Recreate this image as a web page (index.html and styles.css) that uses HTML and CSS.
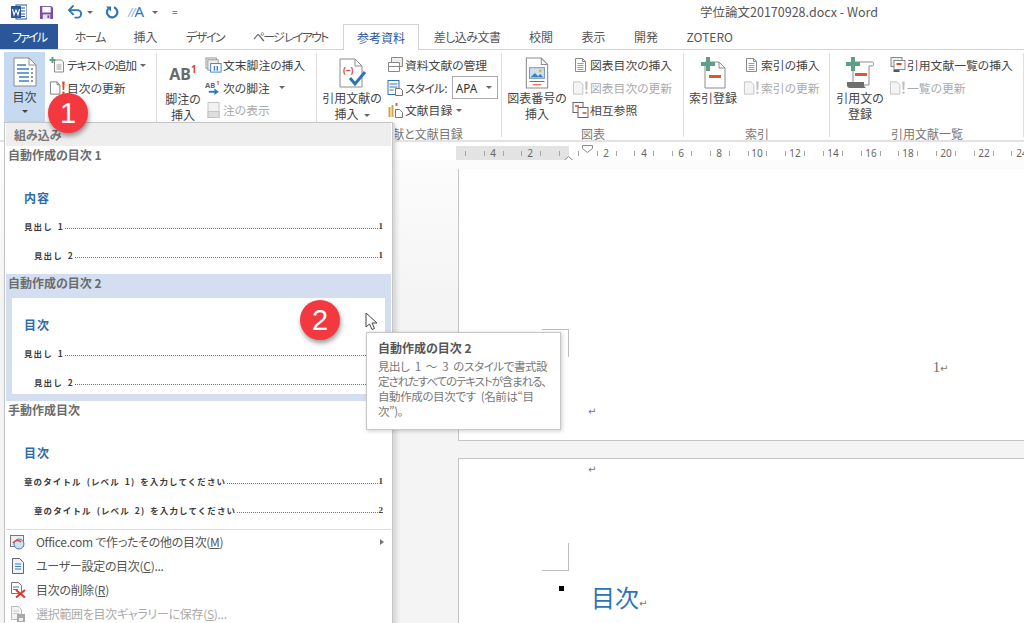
FILE: index.html
```html
<!DOCTYPE html>
<html lang="ja">
<head>
<meta charset="utf-8">
<title>学位論文20170928.docx - Word</title>
<link rel="stylesheet" href="styles.css">
</head>
<body>
<svg class="defs" aria-hidden="true">
  <symbol id="page" viewBox="0 0 16 16"><path d="M3 1.500h7l3 3v10H3z" fill="#fff" stroke="#8a8a8a"/><path d="M10 1.500v3h3" fill="none" stroke="#8a8a8a"/><path d="M5 6.500h6M5 8.500h6M5 10.500h6M5 12.500h6" stroke="#9a9a9a"/></symbol>
  <symbol id="update" viewBox="0 0 18 16"><path d="M1.500 1.500h7l3 3v10h-10z" fill="#fff" stroke="#7c7c7c"/><path d="M8.500 1.500v3h3" fill="none" stroke="#7c7c7c"/><path d="M14 1h2.600l-.5 9H14.500z" fill="#d9472b"/><rect x="14.200" y="11.800" width="2.200" height="2.400" fill="#d9472b"/></symbol>
  <symbol id="update-off" viewBox="0 0 18 16"><path d="M1.500 1.500h7l3 3v10h-10z" fill="#f4f4f4" stroke="#c4c4c4"/><path d="M14 1h2.600l-.5 9H14.500z" fill="#bdbdbd"/><rect x="14.200" y="11.800" width="2.200" height="2.400" fill="#bdbdbd"/></symbol>
  <symbol id="addpage" viewBox="0 0 28 32"><path d="M6 5h14l6 6v20H6z" fill="#fff" stroke="#8c8c8c"/><path d="M20 5v6h6" fill="none" stroke="#8c8c8c"/><path d="M7 0h4v5h5v4h-5v5H7V9H2V5h5z" fill="#5f9e86"/><rect x="10" y="18" width="12" height="3" fill="#d9583a"/></symbol>
</svg>

<header class="titlebar">
  <svg class="qat qat-word" viewBox="0 0 16 16"><rect x="5" y="1" width="11" height="14" fill="#fff" stroke="#2b579a"/><path d="M10 4h4M10 7h4M10 10h4M10 12.500h4" stroke="#2b579a"/><rect y="2" width="10" height="12" fill="#2b579a"/><path d="M1.500 5l1.500 6 2-5 2 5 1.500-6" fill="none" stroke="#fff" stroke-width="1.100"/></svg>
  <svg class="qat qat-save" viewBox="0 0 16 16"><path d="M1 1h12l2 2v12H1z" fill="#7a4f9f"/><rect x="3.500" y="2" width="9" height="6" fill="#fff"/><rect x="4" y="10" width="8" height="5" fill="#e9e2f0"/><rect x="9" y="11" width="2" height="3" fill="#7a4f9f"/></svg>
  <svg class="qat qat-undo" viewBox="0 0 16 14"><path d="M2 5h8a4 4 0 0 1 0 8H7" fill="none" stroke="#2e75b6" stroke-width="2"/><path d="M6 0L1 5l5 5" fill="none" stroke="#2e75b6" stroke-width="2"/></svg>
  <span class="caret qat-c1"></span>
  <svg class="qat qat-redo" viewBox="0 0 14 14"><path d="M9 2.300a5.200 5.200 0 1 1-5.800 1.500" fill="none" stroke="#2e75b6" stroke-width="2.200"/><path d="M1 1.500h5v5z" fill="#2e75b6"/></svg>
  <span class="qat-font"><i>//</i>A</span>
  <span class="caret"></span>
  <span class="qat-more">=</span>
  <span class="doc-title">学位論文20170928.docx - Word</span>
</header>

<nav class="tabs">
  <span class="tab tab-file"><span class="k-file">ファイル</span></span>
  <span class="tab tab-first k">ホーム</span>
  <span class="tab">挿入</span>
  <span class="tab k">デザイン</span>
  <span class="tab k-layout">ページ レイアウト</span>
  <span class="tab tab-active">参考資料</span>
  <span class="tab k-merge">差し込み文書</span>
  <span class="tab">校閲</span>
  <span class="tab">表示</span>
  <span class="tab">開発</span>
  <span class="tab">ZOTERO</span>
</nav>

<section class="ribbon">
  <div class="group g1">
    <div class="group-body">
      <div class="big big-toc">
        <svg class="big-icon" viewBox="0 0 24 30"><path d="M1 1h15l7 7v21H1z" fill="#fff" stroke="#8c8c8c"/><path d="M16 1v7h7" fill="none" stroke="#8c8c8c"/><path d="M4 8h9M4 12h12M4 16h12M6 20h10M6 24h10" stroke="#3f7fc4" stroke-width="1.500"/><path d="M18 12h2M18 16h2M18 20h2M18 24h2" stroke="#777" stroke-width="1.500"/></svg>
        <span class="big-label">目次</span>
        <span class="caret caret-big"></span>
      </div>
      <div class="rows">
        <div class="row"><svg class="ico" viewBox="0 0 16 16"><path d="M5 3h7l2 2v10H5z" fill="#fff" stroke="#8a8a8a"/><path d="M7 8h5M7 10h5M7 12h5" stroke="#9a9a9a"/><path d="M2 0h2v2h2v2H4v2H2V4H0V2h2z" fill="#5f9e86"/></svg><span class="k-row">テキストの追加</span><span class="caret"></span></div>
        <div class="row"><svg class="ico" viewBox="0 0 18 16"><use href="#update"/></svg>目次の更新</div>
      </div>
    </div>
    <div class="group-label">目次</div>
  </div>

  <div class="group g2">
    <div class="group-body">
      <div class="big big-note">
        <span class="ab">AB<sup>1</sup></span>
        <span class="big-label">脚注の<br>挿入</span>
      </div>
      <div class="rows">
        <div class="row"><svg class="ico" viewBox="0 0 18 16"><rect x="1" y="0.500" width="11" height="11" fill="#eee" stroke="#999"/><rect x="3" y="2.500" width="11" height="11" fill="#eee" stroke="#999"/><rect x="6" y="6.500" width="11" height="9" fill="#fff" stroke="#3f7fc4"/><path d="M10 9v5M13 9v5" stroke="#3f7fc4" stroke-width="1.500"/></svg>文末脚注の挿入</div>
        <div class="row"><svg class="ico" viewBox="0 0 18 16"><text x="0" y="8" class="ab-mini">AB</text><text x="12" y="5" class="ab-mini-sup">1</text><path d="M4 12h8" stroke="#2e75b6" stroke-width="2"/><path d="M10 8.500l4.500 3.500-4.500 3.500z" fill="#2e75b6"/></svg>次の脚注<span class="caret caret-wide"></span></div>
        <div class="row row-off"><svg class="ico" viewBox="0 0 16 16"><rect x="2.500" y="0.500" width="11" height="15" fill="#f2f2f2" stroke="#c4c4c4"/><rect x="2.500" y="9.500" width="11" height="6" fill="#ddd" stroke="#c4c4c4"/></svg>注の表示</div>
      </div>
    </div>
    <div class="group-label">脚注</div>
  </div>

  <div class="group g3">
    <div class="group-body">
      <div class="big big-cite">
        <svg class="big-icon" viewBox="0 0 30 30"><path d="M3 1h15l7 7v21H3z" fill="#fff" stroke="#8c8c8c"/><path d="M18 1v7h7" fill="none" stroke="#8c8c8c"/><text x="6" y="15" class="cite-mark">(–)</text><path d="M13 20l5 6 10-12" fill="none" stroke="#2e75b6" stroke-width="3"/></svg>
        <span class="big-label">引用文献の<br>挿入<span class="caret caret-in"></span></span>
      </div>
      <div class="rows">
        <div class="row"><svg class="ico" viewBox="0 0 16 16"><path d="M4 .5h11v9H4z" fill="#eee" stroke="#888"/><path d="M1 5.500h11v9H1z" fill="#fff" stroke="#888"/><path d="M1 9.500h11" stroke="#888"/></svg>資料文献の管理</div>
        <div class="row"><svg class="ico" viewBox="0 0 16 16"><rect x=".5" y=".5" width="11" height="14" fill="#fff" stroke="#2e75b6"/><path d="M2 4h8M2 7h8M2 10h4" stroke="#2e75b6"/><path d="M8 8.500h5l2 2v5H8z" fill="#fff" stroke="#777"/></svg><span class="k-style">スタイル:</span><span class="select">APA<span class="caret"></span></span></div>
        <div class="row"><svg class="ico" viewBox="0 0 16 16"><path d="M1 5h2v10H1zM4 3h2v12H4z" fill="#d9a441"/><path d="M8 7.500h4l3 3v5H8z" fill="#fff" stroke="#777"/><path d="M8 1h2v3H8z" fill="#c65"/></svg>文献目録<span class="caret"></span></div>
      </div>
    </div>
    <div class="group-label">引用文献と文献目録</div>
  </div>

  <div class="group g4">
    <div class="group-body">
      <div class="big big-cap">
        <svg class="big-icon" viewBox="0 0 24 30"><path d="M2 1h14l6 6v22H2z" fill="#fff" stroke="#8c8c8c"/><path d="M16 1v6h6" fill="none" stroke="#8c8c8c"/><rect x="5" y="10" width="14" height="10" fill="#cfe0f1" stroke="#7a9cc0"/><path d="M6 19l4-4 3 3 2-2 3 3z" fill="#3f7fc4"/><circle cx="15" cy="13" r="1.500" fill="#e6b33e"/><path d="M5 23h14M8 26h8" stroke="#d9472b"/></svg>
        <span class="big-label">図表番号の<br>挿入</span>
      </div>
      <div class="rows">
        <div class="row"><svg class="ico" viewBox="0 0 16 16"><use href="#page"/></svg>図表目次の挿入</div>
        <div class="row row-off"><svg class="ico" viewBox="0 0 18 16"><use href="#update-off"/></svg>図表目次の更新</div>
        <div class="row"><svg class="ico" viewBox="0 0 16 16"><rect x=".5" y=".5" width="10" height="10" fill="#fff" stroke="#666"/><rect x="5.500" y="5.500" width="10" height="10" fill="#fff" stroke="#666"/><path d="M2.500 4h4M10 11h4" stroke="#d9472b" stroke-width="1.500"/></svg>相互参照</div>
      </div>
    </div>
    <div class="group-label">図表</div>
  </div>

  <div class="group g5">
    <div class="group-body">
      <div class="big big-index">
        <svg class="big-icon" viewBox="0 0 28 32"><use href="#addpage"/></svg>
        <span class="big-label">索引登録</span>
      </div>
      <div class="rows">
        <div class="row"><svg class="ico" viewBox="0 0 16 16"><use href="#page"/></svg>索引の挿入</div>
        <div class="row row-off"><svg class="ico" viewBox="0 0 18 16"><use href="#update-off"/></svg>索引の更新</div>
      </div>
    </div>
    <div class="group-label">索引</div>
  </div>

  <div class="group g6">
    <div class="group-body">
      <div class="big big-biblio">
        <svg class="big-icon" viewBox="0 0 30 32"><path d="M8 5h19c2 0 2 4 0 4h-3v19H8z" fill="#fff" stroke="#8c8c8c"/><path d="M2 25h17v3c0 2 2 3 2 3H5c-2 0-3-1-3-3z" fill="#6e6e6e"/><path d="M6 0h4v5h5v4h-5v5H6V9H1V5h5z" fill="#5f9e86"/><rect x="10" y="16" width="12" height="3" fill="#d9583a"/></svg>
        <span class="big-label">引用文の<br>登録</span>
      </div>
      <div class="rows">
        <div class="row"><svg class="ico" viewBox="0 0 16 16"><rect x="1.500" y=".5" width="11" height="9" fill="#eee" stroke="#888"/><rect x="4.500" y="3.500" width="11" height="9" fill="#fff" stroke="#888"/><path d="M7 7h5" stroke="#d9472b" stroke-width="2"/><rect x="4" y="13" width="6" height="2" fill="#555"/></svg>引用文献一覧の挿入</div>
        <div class="row row-off"><svg class="ico" viewBox="0 0 18 16"><use href="#update-off"/></svg>一覧の更新</div>
      </div>
    </div>
    <div class="group-label">引用文献一覧</div>
  </div>
</section>

<svg class="ruler" viewBox="456 146 568 15">
  <rect x="456" y="146" width="113" height="14" fill="#e3e3e3"/>
  <rect x="569" y="146" width="455" height="14" fill="#fff"/>
  <path class="ticks" d="M465.500 151v5M484.500 151v5M503.500 151v5M521.500 151v5M540.500 151v5M559.500 151v5M578.500 151v5M597.500 151v5M616.500 151v5M634.500 151v5M653.500 151v5M672.500 151v5M691.500 151v5M710.500 151v5M729.500 151v5M748.500 151v5M766.500 151v5M785.500 151v5M804.500 151v5M823.500 151v5M842.500 151v5M861.500 151v5M880.500 151v5M898.500 151v5M917.500 151v5M936.500 151v5M955.500 151v5M974.500 151v5M993.500 151v5M1011.500 151v5"/>
  <g class="ruler-nums">
    <text x="493" y="157">4</text><text x="530" y="157">2</text><text x="606" y="157">2</text><text x="644" y="157">4</text><text x="681" y="157">6</text><text x="719" y="157">8</text><text x="757" y="157">10</text><text x="795" y="157">12</text><text x="833" y="157">14</text><text x="871" y="157">16</text><text x="908" y="157">18</text><text x="946" y="157">20</text><text x="984" y="157">22</text><text x="1022" y="157">24</text>
  </g>
</svg>
<svg class="indent indent-first" viewBox="0 0 11 8"><path d="M.5.500h10v3l-5 4-5-4z" fill="#fff" stroke="#888"/></svg>
<svg class="indent indent-hang" viewBox="0 0 11 13"><path d="M.5 5l5-4.500 5 4.500v7.500H.5zM.5 7.500h10" fill="#fff" stroke="#888"/></svg>

<main class="doc">
  <div class="page page-one">
    <span class="mark mark-tr"></span>
    <span class="pagenum">1<span class="ret">↵</span></span>
    <span class="ret ret-a">↵</span>
  </div>
  <div class="page page-two">
    <span class="ret ret-b">↵</span>
    <span class="mark mark-br"></span>
    <span class="bullet"></span>
    <span class="doc-heading">目次<span class="ret">↵</span></span>
  </div>
</main>

<aside class="menu">
  <div class="menu-head">組み込み</div>
  <div class="item">
    <div class="item-label">自動作成の目次 1</div>
    <div class="preview">
      <div class="pv-heading">内容</div>
      <div class="pv-row"><span>見出し 1</span><i></i><b>1</b></div>
      <div class="pv-row pv-sub"><span>見出し 2</span><i></i><b>1</b></div>
    </div>
  </div>
  <div class="item item-hl">
    <div class="item-label">自動作成の目次 2</div>
    <div class="preview">
      <div class="pv-heading">目次</div>
      <div class="pv-row"><span>見出し 1</span><i></i><b>1</b></div>
      <div class="pv-row pv-sub"><span>見出し 2</span><i></i><b>1</b></div>
    </div>
  </div>
  <div class="item">
    <div class="item-label">手動作成目次</div>
    <div class="preview">
      <div class="pv-heading">目次</div>
      <div class="pv-row"><span>章のタイトル (レベル 1) を入力してください</span><i></i><b>1</b></div>
      <div class="pv-row pv-sub"><span>章のタイトル (レベル 2) を入力してください</span><i></i><b>2</b></div>
    </div>
  </div>
  <div class="cmds">
    <div class="cmd"><svg class="cmd-ico" viewBox="0 0 16 16"><rect x=".5" y="1.500" width="13" height="11" fill="#eee" stroke="#777"/><circle cx="9" cy="10" r="5" fill="#cfe0f1" stroke="#3f7fc4"/><path d="M3 9c2-3 6-3 8-1" fill="none" stroke="#d9472b" stroke-width="1.500"/></svg><span class="cmd-text">Office.com で作ったその他の目次(<u>M</u>)</span><span class="submenu"></span></div>
    <div class="cmd"><svg class="cmd-ico" viewBox="0 0 16 16"><path d="M2.500.5h7l4 4v11h-11z" fill="#eef3f9" stroke="#666"/><path d="M5 6h6M5 8.500h6M5 11h6" stroke="#3f7fc4"/></svg><span class="cmd-text">ユーザー設定の目次(<u>C</u>)...</span></div>
    <div class="cmd"><svg class="cmd-ico" viewBox="0 0 16 16"><path d="M1.500.5h7l3 3v8h-10z" fill="#fff" stroke="#777"/><path d="M3 5h6M3 7.500h5" stroke="#3f7fc4"/><path d="M6 8l9 7.500M15 8l-9 7.500" stroke="#d9382b" stroke-width="2"/></svg><span class="cmd-text">目次の削除(<u>R</u>)</span></div>
    <div class="cmd cmd-off"><svg class="cmd-ico" viewBox="0 0 16 16"><path d="M1.500.5h7l3 3v10h-10z" fill="#f2f2f2" stroke="#bbb"/><path d="M3 5h6M3 7.500h6" stroke="#ccc"/><rect x="7" y="8" width="8" height="8" fill="#a8a8a8"/><rect x="9" y="12" width="4" height="3" fill="#eee"/></svg><span class="cmd-text">選択範囲を目次ギャラリーに保存(<u>S</u>)...</span></div>
  </div>
</aside>

<div class="tooltip">
  <div class="tip-title">自動作成の目次 2</div>
  <div class="tip-body">見出し 1 ～ 3 のスタイルで書式設<br><span class="tip-tight">定されたすべてのテキストが含まれる、</span><br>自動作成の目次です (名前は“目<br>次”)。</div>
</div>

<span class="badge badge-one">1</span>
<span class="badge badge-two">2</span>
<svg class="cursor" viewBox="0 0 13 19"><path d="M1 1v14l3.500-3 2.500 5.500 2.500-1-2.500-5.500H12z" fill="#fff" stroke="#444"/></svg>
</body>
</html>
```
FILE: styles.css
```css
* { box-sizing: border-box; }
html, body { margin: 0; padding: 0; }
body {
  position: relative;
  width: 1024px;
  height: 623px;
  overflow: hidden;
  background: #fff;
  color: #444;
  font: 12px/16px "Noto Sans CJK JP", "Noto Sans", sans-serif;
  font-feature-settings: "palt";
}
.defs { position: absolute; width: 0; height: 0; }

/* title bar */
.titlebar { display: flex; align-items: center; height: 24px; padding-left: 11px; }
.qat { display: block; flex: none; }
.qat-word { width: 16px; height: 16px; }
.qat-save { width: 15px; height: 15px; margin-left: 12px; }
.qat-undo { width: 15px; height: 14px; margin-left: 14px; }
.qat-c1 { margin-left: 6px; }
.qat-redo { width: 14px; height: 14px; margin-left: 12px; }
.qat-font { width: 19px; margin-left: 9px; margin-right: 1px; color: #2e75b6; font-size: 15px; font-family: "Noto Sans", sans-serif; white-space: nowrap; letter-spacing: -1px; }
.qat-font i { color: #8db2d8; font-size: 12px; }
.qat-more { margin-left: 14px; font-size: 10px; color: #666; }
.doc-title { margin-left: auto; margin-right: 146px; font-size: 12.5px; color: #555; font-feature-settings: normal; }
.caret { display: inline-block; width: 0; height: 0; margin-left: 4px; border: 3px solid transparent; border-top-color: #666; border-bottom: 0; vertical-align: middle; }

/* tabs */
.tabs { display: flex; height: 25px; }
.tab { padding: 0 14.25px; line-height: 25px; white-space: nowrap; color: #555; }
.tab-file { width: 58px; padding: 0; text-align: center; background: #2b579a; color: #fff; }
.tab-first { margin-left: 2.5px; }
.k { letter-spacing: -1.4px; }
.k-layout { letter-spacing: -1.75px; }
.k-merge { letter-spacing: -.5px; }
.k-file { letter-spacing: -1.8px; }
.k-row { letter-spacing: -1px; }
.k-style { letter-spacing: -.8px; }
.tab-active { position: relative; z-index: 1; margin-left: 1px; margin-right: .5px; padding: 0 13px; height: 26px; background: #fff; border: 1px solid #d4d4d4; border-bottom: 0; color: #2b579a; }

/* ribbon */
.ribbon { display: flex; height: 93px; border-top: 1px solid #d4d4d4; border-bottom: 2px solid #e3e3e3; }
.group { display: flex; flex-direction: column; flex: none; position: relative; }
.group::after { content: ""; position: absolute; right: 0; top: 3px; bottom: 3px; width: 1px; background: #dedede; }
.g1 { width: 157px; }
.g2 { width: 160px; }
.g3 { width: 185px; }
.g4 { width: 182px; }
.g5 { width: 146px; }
.g6 { width: 194px; }
.group-body { display: flex; height: 76px; }
.group-label { height: 14px; text-align: center; color: #777; }
.big { display: flex; flex-direction: column; align-items: center; flex: none; text-align: center; padding-top: 7px; }
.big-icon { display: block; width: 30px; height: 32px; flex: none; }
.big-label { margin-top: 1px; color: #444; line-height: 16px; }
.big-toc { width: 41px; margin-left: 4px; margin-top: 2px; height: 70px; padding-top: 5px; background: #c5d9f1; }
.big-toc .big-icon { width: 24px; height: 30px; }
.big-toc .big-label { margin-top: 2px; }
.caret-big { margin: 5px 0 0; border-top-color: #444; }
.caret-in { margin-left: 5px; }
.big-note { width: 42px; margin-left: 5px; }
.big-cite { width: 60px; margin-left: 5px; }
.big-cap { width: 60px; margin-left: 5px; }
.big-index { width: 50px; margin-left: 4px; }
.big-biblio { width: 50px; margin-left: 5px; }
.ab { display: block; height: 33px; color: #6a6a6a; font: 700 16px/34px "Noto Sans", sans-serif; white-space: nowrap; }
.ab sup { font-size: 10px; line-height: 0; color: #d9472b; vertical-align: 7px; }
.ab-mini { font: 700 8px "Noto Sans", sans-serif; fill: #666; }
.ab-mini-sup { font: 700 6px "Noto Sans", sans-serif; fill: #d9472b; }
.cite-mark { font: 700 9px "Noto Sans", sans-serif; fill: #d9472b; }

.rows { display: flex; flex-direction: column; flex: none; padding-top: 4px; }
.g1 .rows { margin-left: 4px; }
.g2 .rows { margin-left: 1px; }
.g3 .rows { margin-left: 5px; }
.g4 .rows { margin-left: 5px; }
.g5 .rows { margin-left: 5px; }
.g6 .rows { margin-left: 4px; }
.row { display: flex; align-items: center; height: 22.5px; font-size: 11.8px; white-space: nowrap; color: #444; }
.row-off { color: #aaa; }
.ico { display: block; flex: none; width: 17px; height: 16px; margin-right: 1px; }
.caret-wide { margin-left: 9px; }
.select { display: flex; align-items: center; justify-content: space-between; width: 46px; height: 23px; margin-left: 5px; padding: 0 5px 0 3px; border: 1px solid #ababab; color: #333; font-family: "Noto Sans", sans-serif; }

/* ruler */
.ruler { display: block; position: absolute; left: 456px; top: 146px; width: 568px; height: 15px; }
.ticks { stroke: #a6a6a6; fill: none; }
.ruler-nums text { font: 10px "Noto Sans", sans-serif; fill: #666; text-anchor: middle; }
.indent { position: absolute; }
.indent-first { left: 582px; top: 145px; width: 11px; height: 8px; }
.indent-hang { left: 563px; top: 156px; width: 11px; height: 13px; }

/* document */
.doc { position: absolute; left: 0; top: 160px; width: 1024px; height: 463px; padding: 9px 0 0 458px; background: linear-gradient(#fcfcfc, #f4f4f4 140px); overflow: hidden; }
.page { position: relative; background: #fff; border-left: 1px solid #c6c6c6; color: #666; font-family: "Liberation Serif", "Noto Sans CJK JP", serif; }
.page-one { height: 272px; border-bottom: 1px solid #c6c6c6; }
.page-two { height: 200px; margin-top: 17px; border-top: 1px solid #c6c6c6; }
.mark { position: absolute; width: 27px; height: 28px; }
.mark-tr { left: 83px; top: 160px; border-top: 1px solid #bdbdbd; border-right: 1px solid #bdbdbd; }
.mark-br { left: 83px; top: 84px; border-bottom: 1px solid #bdbdbd; border-right: 1px solid #bdbdbd; }
.ret { color: #777; font: 10px/12px "DejaVu Sans", sans-serif; }
.pagenum { position: absolute; left: 474px; top: 190px; font-size: 14px; line-height: 18px; }
.ret-a { position: absolute; left: 129px; top: 237px; }
.ret-b { position: absolute; left: 129px; top: 5px; }
.bullet { position: absolute; left: 100px; top: 127px; width: 5px; height: 5px; background: #000; }
.doc-heading { position: absolute; left: 132px; top: 121px; color: #2e74b5; font: 24px/34px "Noto Sans CJK JP", sans-serif; white-space: nowrap; }

/* gallery menu */
.menu { position: absolute; left: 4px; top: 122px; width: 389px; height: 520px; padding: 0 1px; background: #fff; border: 1px solid #c6c6c6; box-shadow: 2px 1px 0 #dadada, 3px 2px 5px rgba(0,0,0,.14); }
.menu-head { height: 23px; padding-left: 8px; background: #eee; color: #777; font-weight: 700; line-height: 24px; }
.item { height: 128px; }
.item-hl { height: 127px; background: #d3dff0; }
.item-label { height: 24px; padding-left: 2px; color: #6c6c6c; font-weight: 700; line-height: 18px; }
.preview { height: 96px; margin: 0 6px; padding: 19px 2px 0 12px; background: #fff; color: #333; }
.item-hl .preview { padding-top: 18px; }
.pv-heading { height: 18px; margin-bottom: 4px; color: #2e6ca8; font-weight: 700; line-height: 18px; letter-spacing: 1px; }
.pv-row { display: flex; align-items: flex-end; height: 29px; padding-bottom: 9px; font-size: 8.5px; line-height: 10px; font-weight: 700; color: #3a3a3a; font-feature-settings: normal; letter-spacing: 1.1px; word-spacing: 2px; }
.pv-row span { white-space: nowrap; }
.pv-row i { flex: 1; margin: 0 1px 2px; border-bottom: 1px dotted #777; }
.pv-row b { font-family: "Liberation Serif", serif; font-size: 9px; letter-spacing: 0; }
.pv-sub { padding-left: 10px; }

.cmds { border-top: 1px solid #dcdcdc; }
.cmd { display: flex; align-items: center; height: 24px; padding-left: 4px; color: #555; letter-spacing: -.3px; position: relative; white-space: nowrap; }
.cmd-ico { display: block; flex: none; width: 16px; height: 16px; margin-right: 10px; }
.cmd-off { color: #aaa; }
.submenu { position: absolute; right: 7px; top: 9px; border: 3px solid transparent; border-left: 4px solid #777; border-right: 0; height: 0; width: 0; }

/* tooltip */
.tooltip { position: absolute; left: 366px; top: 332px; width: 195px; height: 98px; padding: 6px 0 0 11px; background: #fff; border: 1px solid #c8c8c8; box-shadow: 1px 1px 4px rgba(0,0,0,.2); white-space: nowrap; z-index: 3; }
.tip-title { height: 20px; color: #555; font-weight: 700; line-height: 18px; }
.tip-body { color: #777; font-size: 11.5px; line-height: 15px; letter-spacing: -.4px; word-spacing: 3px; }
.tip-tight { letter-spacing: -1.1px; }

/* callouts */
.badge { position: absolute; display: flex; align-items: center; justify-content: center; width: 40px; height: 40px; border-radius: 50%; background: #f3393f; color: #fff; font: 400 29px/40px "Liberation Sans", sans-serif; box-shadow: 1px 3px 5px rgba(0,0,0,.4); z-index: 4; }
.badge-one { left: 48px; top: 93px; }
.badge-two { left: 300px; top: 300px; }
.cursor { position: absolute; left: 365px; top: 312px; width: 13px; height: 19px; z-index: 5; }
```
